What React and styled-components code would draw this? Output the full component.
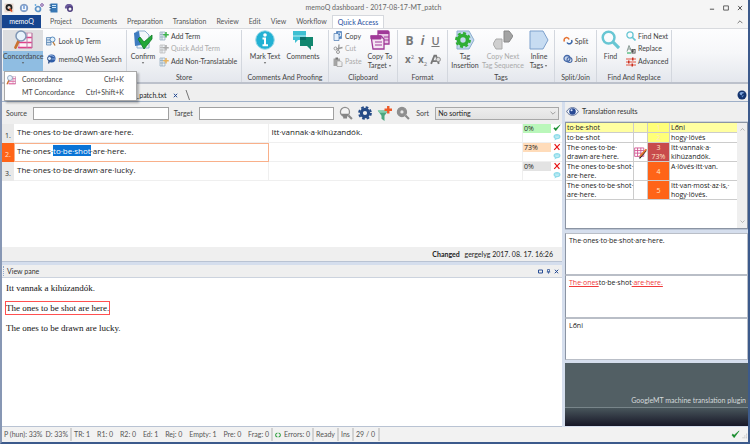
import React from "react";
import styled, { createGlobalStyle, css } from "styled-components";

const Global = createGlobalStyle`
  *, *::before, *::after { box-sizing: border-box; }
  body { margin: 0; background: #f5f5f5; }
  button, input, select { font: inherit; color: inherit; }
  button { border: 0; padding: 0; background: none; }
  svg { display: block; flex: none; }
`;

const ui = `"Lato", "Open Sans", sans-serif`;
const doc = `"Open Sans", "Noto Sans", sans-serif`;

const Window = styled.div`
  display: flex;
  flex-direction: column;
  min-height: 100vh;
  background: #f5f5f5;
  border-left: 2px solid #8797b4;
  border-right: 2px solid #3c5a8c;
  border-bottom: 2px solid #3c5a8c;
  font: 7px/9px ${ui};
  color: #444;
`;

/* ---------- title bar ---------- */
const TitleBar = styled.header`
  display: grid;
  grid-template-columns: 1fr auto 1fr;
  align-items: center;
  height: 15px;
  padding: 0 5px 0 2px;
`;
const QuickIcons = styled.div`
  display: flex;
  gap: 5px;
`;
const Title = styled.h1`
  margin: 0;
  font: inherit;
  color: #666;
`;
const WindowButtons = styled.div`
  display: flex;
  justify-content: flex-end;
  gap: 8px;
`;

/* ---------- tabs ---------- */
const TabRow = styled.nav`
  display: flex;
  height: 13px;
`;
const Tab = styled.button`
  padding: 0 5px;
  height: 13px;
  color: #555;
  ${(p) => p.$main && css`
    width: 39px;
    margin-right: 4px;
    background: #17458f;
    color: #fff;
  `}
  ${(p) => p.$active && css`
    height: 14px;
    background: #fff;
    border: 1px solid #d5d8dd;
    border-bottom: 0;
    color: #1f4fa0;
  `}
`;
const Collapse = styled.button`
  margin-left: auto;
  padding: 0 5px;
`;

/* ---------- ribbon ---------- */
const Ribbon = styled.div`
  display: flex;
  height: 56px;
  padding: 1px 0 0;
  background: linear-gradient(#fdfdfe, #f6f7f9 45%, #e4e7ed);
  border-top: 1px solid #d8dade;
  border-bottom: 2px solid #bcc1cb;
`;
const Group = styled.section`
  display: flex;
  flex-direction: column;
  flex: 0 0 ${(p) => p.$w}px;
  height: 52px;
  border-right: 1px solid #d3d7de;
`;
const GroupBody = styled.div`
  display: flex;
  justify-content: ${(p) => p.$justify || "flex-start"};
  gap: ${(p) => p.$gap || 0}px;
  height: 43px;
  padding-left: ${(p) => p.$pad || 0}px;
`;
const GroupLabel = styled.h2`
  margin: 0;
  font: inherit;
  text-align: center;
  white-space: nowrap;
`;
const BigButton = styled.button`
  display: grid;
  grid-template-rows: 22px 9px 9px;
  justify-items: center;
  align-content: start;
  flex: 0 0 ${(p) => p.$w}px;
  height: 41px;
  color: ${(p) => (p.$off ? "#aaa" : "#444")};
  white-space: nowrap;
  ${(p) => p.$open && css`
    background: linear-gradient(#dddee0 21px, #8fbde2 21px);
  `}
`;
const SmallList = styled.div`
  display: flex;
  flex-direction: column;
  justify-content: space-around;
  padding: ${(p) => (p.$two ? "2px 0 5px" : "0 0 5px")};
`;
const SmallButton = styled.button`
  display: flex;
  align-items: center;
  gap: 2px;
  color: ${(p) => (p.$off ? "#aaa" : "#444")};
  white-space: nowrap;
`;
const FormatGrid = styled.div`
  display: grid;
  grid-template-columns: repeat(3, 13px);
  grid-template-rows: 18px 18px;
  place-items: center;
  padding-top: 2px;
`;
const FormatButton = styled.button`
  font: ${(p) => (p.$italic ? "italic " : "")}bold ${(p) => p.$size || 12}px/14px "Open Sans", sans-serif;
  color: #777;
  ${(p) => p.$under && css`text-decoration: underline; font-weight: 600;`}
  sup, sub { font-size: 6px; line-height: 1px; font-weight: 400; }
`;

/* ---------- drop-down menu ---------- */
const MenuAnchor = styled.div`
  position: relative;
`;
const Menu = styled.ul`
  position: absolute;
  z-index: 2;
  top: 41px;
  left: 1px;
  width: 133px;
  margin: 0;
  padding: 1px 0;
  list-style: none;
  background: #fff;
  border: 1px solid #a9a9a9;
  box-shadow: 2px 2px 2px #0004;
`;
const MenuItem = styled.button`
  display: grid;
  grid-template-columns: 16px 1fr auto;
  align-items: center;
  width: 100%;
  height: 13px;
  padding: 0 12px 0 1px;
  text-align: left;
`;

/* ---------- document strip ---------- */
const DocStrip = styled.div`
  display: flex;
  align-items: flex-end;
  justify-content: space-between;
  height: 18px;
  padding-right: 1px;
  background: #efefef;
  border-bottom: 1px solid #9fb0c8;
`;
const DocTab = styled.div`
  display: flex;
  align-items: center;
  gap: 7px;
  height: 12px;
  margin-left: 134px;
  color: #222;
`;

/* ---------- workspace ---------- */
const Workspace = styled.main`
  flex: 1;
  display: grid;
  grid-template-columns: minmax(0, 560fr) minmax(0, 183fr);
  gap: 3px;
  background: #d5deed;
`;
const Column = styled.div`
  display: grid;
  grid-template-rows: ${(p) => p.$rows};
  gap: 3px;
`;
const Panel = styled.section`
  display: flex;
  flex-direction: column;
  min-height: 0;
  background: #fff;
  border-bottom: 1px solid #b9c3d3;
`;
const FilterBar = styled.form`
  display: grid;
  grid-template-columns: 27px 136fr 30px 136fr 80px 21px 124fr;
  align-items: center;
  height: 22px;
  padding: 0 3px 0 4px;
  background: #efefef;
`;
const FilterInput = styled.input`
  width: 100%;
  height: 13px;
  padding: 0 2px;
  border: 1px solid #a0a0a0;
  background: #fff;
`;
const FilterLabel = styled.label`
  padding-left: ${(p) => p.$pad || 0}px;
`;
const FilterTools = styled.div`
  display: flex;
  justify-content: space-between;
  padding: 0 4px 0 5px;
`;
const SortSelect = styled.select`
  width: 100%;
  height: 13px;
  padding: 0 2px;
  border: 1px solid #a8a8a8;
  border-radius: 0;
  appearance: none;
  background: linear-gradient(#ededed, #e2e2e2);
  color: #222;
`;
const SelectWrap = styled.div`
  display: grid;
  align-items: center;
  > * { grid-area: 1 / 1; }
  > svg { justify-self: end; margin-right: 3px; pointer-events: none; }
`;
const Segments = styled.table`
  width: 100%;
  table-layout: fixed;
  border-collapse: separate;
  border-spacing: 0;
  font: 8px/11px ${doc};
  color: #222;
`;
const Num = styled.th`
  height: 19px;
  padding: 3px 0 0;
  font: 7px/9px ${doc};
  background: ${(p) => (p.$on ? "#ff6418" : "#e9e9e9")};
  color: ${(p) => (p.$on ? "#ffe0cc" : "#333")};
`;
const Seg = styled.td`
  height: 19px;
  padding: 2px 2px 0 3px;
  vertical-align: top;
  white-space: nowrap;
  border-bottom: 1px solid #efefef;
  border-right: 1px solid #efefef;
  ${(p) => p.$on && css`
    padding: 1px 1px 0 2px;
    border: 1px solid #f9b08a;
  `}
`;
const Picked = styled.mark`
  background: #0a74d6;
  color: #fff;
`;
const RateCell = styled.td`
  padding: 0;
  vertical-align: top;
  border-bottom: 1px solid #efefef;
`;
const Rate = styled.div`
  width: 28px;
  height: 9px;
  padding-left: 1px;
  font: 7px/9px ${doc};
  background: ${(p) => p.$bg};
`;
const Marks = styled.div`
  display: grid;
  gap: 1px;
  justify-items: center;
`;
const InfoBar = styled.div`
  margin-top: auto;
  height: 14px;
  padding: 3px 9px 0 0;
  text-align: right;
  background: #efefef;
  color: #222;
  b { margin-right: 3px; }
`;
const PaneHead = styled.header`
  display: flex;
  align-items: center;
  height: ${(p) => p.$h}px;
  padding: 0 3px 0 1px;
  gap: 3px;
  background: #efefef;
  border-bottom: 1px solid #ccd3de;
`;
const Grip = styled.span`
  align-self: stretch;
  width: 1px;
  margin: 1px 0;
  border-left: 1px dotted #8fa9d0;
`;
const PaneTitle = styled.h2`
  margin: 0 auto 0 0;
  font: inherit;
  color: #333;
`;
const ViewText = styled.div`
  padding: 4px;
  font: 9px/12px "Liberation Serif", serif;
  color: #111;
  p { margin: 0 0 8px; }
`;
const Framed = styled.span`
  display: inline-block;
  border: 1px solid #ff5050;
  margin: -1px 0 -1px -1px;
`;

/* ---------- results ---------- */
const ResultBox = styled.div`
  display: flex;
  flex: 1;
  align-items: stretch;
  border: 1px solid #8b94a3;
`;
const Results = styled.table`
  flex: 1;
  align-self: flex-start;
  table-layout: fixed;
  width: 100%;
  border-collapse: separate;
  border-spacing: 0;
  font: 7px/9px ${doc};
  color: #222;
`;
const ResultRow = styled.tr`
  background: ${(p) => (p.$on ? "#ffffa0" : "#fff")};
  td { padding: 0 0 0 1px; vertical-align: top; border-bottom: 1px solid #ccc; border-right: 1px solid #ccc; white-space: nowrap; }
  td:last-child { border-right: 0; }
  td:nth-child(2) { padding: 0; vertical-align: middle; }
`;
const Rank = styled.td`
  ${ResultRow} & { padding: 0; vertical-align: middle; }
  text-align: center;
  background: ${(p) => p.$bg};
  color: #ffe6c8;
`;
const ScrollBar = styled.div`
  display: flex;
  flex-direction: column;
  justify-content: space-between;
  align-items: center;
  flex: 0 0 10px;
  padding: 4px 0;
  background: #efefef;
`;
const DetailStack = styled.div`
  display: grid;
  grid-template-rows: 1fr 1fr 1fr;
`;
const Detail = styled.div`
  padding: 2px 3px;
  background: #fff;
  border: 1px solid #b9bec7;
  border-left-color: #8b94a3;
  font: 7px/9px ${doc};
  color: #222;
`;
const Removed = styled.del`
  color: #f03a3a;
  text-decoration: underline;
  text-decoration-thickness: 1px;
`;
const Plugin = styled.footer`
  display: flex;
  flex-direction: column;
  justify-content: flex-end;
  margin-bottom: 1px;
  background: #525f64;
  color: #d5dadb;
  text-align: right;
  p { margin: 0 2px 2px; }
`;
const PluginBase = styled.div`
  height: 19px;
  border-top: 1px solid #78858a;
  background: linear-gradient(#48555b, #171727);
`;

/* ---------- status bar ---------- */
const StatusBar = styled.footer`
  display: flex;
  align-items: center;
  height: 15px;
  background: #f2f2f2;
  color: #555;
`;
const Stat = styled.span`
  display: flex;
  align-items: center;
  justify-content: space-between;
  gap: 3px;
  flex: 0 0 ${(p) => p.$w}px;
  height: 13px;
  padding: 0 2px;
  border-right: 2px solid #d2d2d2;
  white-space: nowrap;
`;
const StatusEnd = styled.div`
  display: flex;
  align-items: flex-end;
  gap: 2px;
  margin-left: auto;
`;

/* ---------- icons ---------- */
const Svg = ({ w = 10, h = w, vb = 20, children }) => (
  <svg width={w} height={h} viewBox={`0 0 ${vb} ${vb}`} fill="none" aria-hidden="true">{children}</svg>
);
const Lens = ({ w, c = "#68c6d3" }) => (
  <Svg w={w}><circle cx="8" cy="8" r="6.2" stroke={c} strokeWidth="2.6" /><path d="M12.5 12.5 19 19" stroke={c} strokeWidth="3.4" /></Svg>
);
const ConcordIcon = ({ w = 20 }) => (
  <Svg w={w}>
    <path d="M8 3h11v15H6v-7" fill="#fdf3f8" stroke="#c98fb0" strokeWidth=".8" />
    <path d="M9 7.500h10M6 12.500h13M5 17.500h14" stroke="#e0408a" strokeWidth="1.600" />
    <path d="M14 3v15M19 3v15" stroke="#b97fa6" strokeWidth="1" />
    <path d="M6 10 2.500 17.500" stroke="#c9722f" strokeWidth="2.800" strokeLinecap="round" />
    <circle cx="8" cy="6" r="5" fill="#e8f3fb" stroke="#7f96b4" strokeWidth="1.500" />
  </Svg>
);
const DocIcon = ({ plus = "#3bb44a", c = "#8da8bb" }) => (
  <Svg w={10}>
    <path d="M2 2h10v16H2z" fill="#eef3f7" stroke={c} strokeWidth="1.4" />
    <path d="M2 7h10M2 12h10M6 2v16" stroke={c} strokeWidth="1.6" />
    <path d="M14 2v11M8.5 7.5h11" stroke={plus} strokeWidth="3" />
  </Svg>
);
const Bubble = () => (
  <Svg w={8}><ellipse cx="10" cy="9" rx="8.6" ry="6.6" fill="#8fdcea" /><path d="m5 13-1 6 6-4z" fill="#8fdcea" /><path d="M5 8h10M6 11h8" stroke="#fff" strokeWidth="1.2" /></Svg>
);
const Check = ({ w = 8, c = "#138a2b" }) => (
  <Svg w={w}><path d="m2 11 5 6L18 2 7 11.500 4 9z" fill={c} stroke={c} strokeWidth="1.2" /></Svg>
);
const Cross = ({ w = 8, c = "#e81414", s = 3 }) => (
  <Svg w={w}><path d="M4 3 16 17M17 3 3 17" stroke={c} strokeWidth={s} /></Svg>
);
const Chevron = ({ up, c = "#888", w = 6 }) => (
  <Svg w={w}><path d={up ? "M2 14 10 6l8 8" : "m2 6 8 8 8-8"} stroke={c} strokeWidth="2.6" /></Svg>
);
const Caret = () => <Svg w={4}><path d="M4 6h12l-6 8z" fill="#555" /></Svg>;
const InlineCaret = styled.span`
  display: inline-flex;
  align-items: center;
  gap: 1px;
`;
const ConfirmIcon = () => (
  <Svg w={20}>
    <path d="M4 1h8l4 4v13H4z" fill="#f4f8fc" stroke="#8fb0d0" />
    <path d="M1 3 6 1l2 14-6 1z" fill="#3f7cc0" />
    <path d="m5 9 2-2 4 5 8-7v4l-8 10z" fill="#22a83a" stroke="#0e7a22" strokeWidth=".8" />
  </Svg>
);
const InfoIcon = () => (
  <Svg w={20}>
    <circle cx="10" cy="10" r="9.300" fill="#22b1d3" stroke="#9fdbe8" />
    <circle cx="10" cy="5" r="1.800" fill="#fff" />
    <path d="M7.500 8.500H10V15M7.500 15.200h5.500" stroke="#fff" strokeWidth="2" />
  </Svg>
);
const CommentsIcon = () => (
  <Svg w={20}>
    <path d="M0 1h13v9H5l-3 3v-3H0z" fill="#3fc0d2" /><path d="M0 6h13" stroke="#bdeef2" />
    <path d="M7 7h13v9h-2v4l-4-4H7z" fill="#12876f" /><path d="M7 7h6v3H7z" fill="#0b6c68" />
  </Svg>
);
const CopyIcon = () => (
  <Svg w={10}><path d="M7 1h10v14H7z" fill="#4f86c6" stroke="#2d62a4" /><path d="M2 5h8l2 3v11H2z" fill="#e6f0fa" stroke="#4a78b0" strokeWidth="1.400" /><path d="M10 4h5v6h-3" stroke="#fff" strokeWidth="1.500" /></Svg>
);
const CutIcon = () => (
  <Svg w={10}><circle cx="5" cy="9" r="3" stroke="#999" strokeWidth="2" /><circle cx="10" cy="16" r="3" stroke="#999" strokeWidth="2" /><path d="M7 10 19 7M11 13 12 1" stroke="#999" strokeWidth="2.600" /></Svg>
);
const PasteIcon = () => (
  <Svg w={10}><path d="M1 3h13v15H1z" fill="#a5a5a5" /><path d="M5 1h5v4H5z" fill="#777" /><path d="M8 8h7l3 3v8H8z" fill="#eee" stroke="#999" strokeWidth="1.400" /></Svg>
);
const CopyToIcon = () => (
  <Svg w={20}>
    <path d="M8 1h10l1 1v12H8z" fill="#e9c9e6" stroke="#a03a98" strokeWidth="1.300" /><path d="M8 1h11v3H8z" fill="#a03a98" />
    <path d="M1 6h10l3 3v10H3z" fill="#f5e6f4" stroke="#a03a98" strokeWidth="1.300" /><path d="M1 6h10v3H1zM5 12h7M5 15h7" fill="#a03a98" stroke="#a03a98" />
    <path d="M14 7h5M14 10h5" stroke="#a03a98" />
  </Svg>
);
const TagInsertIcon = () => (
  <Svg w={20}>
    <path d="M2 1h12l5 9-5 9H2z" fill="#c3d8ee" stroke="#8daecf" />
    <circle cx="8" cy="10" r="4.500" stroke="#2fae35" strokeWidth="3.600" /><circle cx="8" cy="10" r="6.900" stroke="#2fae35" strokeWidth="2" strokeDasharray="3 2.400" />
  </Svg>
);
const CopyTagIcon = () => (
  <Svg w={20}><path d="M11 1h5l4 5-4 6h-5z" fill="#a3a3a3" stroke="#888" /><path d="M0 14l3-5h6v10H3z" fill="#cfcfcf" stroke="#aaa" /></Svg>
);
const InlineTagIcon = () => (
  <Svg w={20}><path d="M1 1h13l5 9-5 9H1z" fill="#c7dcf2" stroke="#7da0cc" /></Svg>
);
const SplitIcon = () => (
  <Svg w={10}><path d="M3 11a5 5 0 1 1 9-4" stroke="#e5702f" strokeWidth="3" /><path d="M17 8a5 5 0 1 1-9 5" stroke="#3a66a8" strokeWidth="3" /></Svg>
);
const JoinIcon = () => (
  <Svg w={10}><circle cx="8" cy="9" r="6" fill="#c3d3ec" stroke="#4669a8" strokeWidth="2.600" /><circle cx="13" cy="12" r="5" stroke="#4669a8" strokeWidth="2.200" /></Svg>
);
const ReplaceIcon = () => (
  <Svg w={10}><path d="M2 15 6 3l5 12M4 10h6" stroke="#889a94" strokeWidth="2" /><path d="M2 18h8" stroke="#39b36b" strokeWidth="2.400" /><path d="M11 10h8v9h-8z" fill="#444" /><path d="M13 12h4v5h-4M14 14.500h3" stroke="#fff" /></Svg>
);
const AdvancedIcon = () => (
  <Svg w={10}><path d="M0 4h20M0 10h20M0 16h20" stroke="#e2533f" strokeWidth="2" /><path d="M12 1h3v6h-3zM4 7h3v6H4zM11 13h3v6h-3z" fill="#c92f20" /></Svg>
);
const LookUpIcon = () => (
  <Svg w={10}><path d="M1 3h9v15H1z" fill="#cfe0f0" stroke="#5c86b4" strokeWidth="1.600" /><path d="M1 8h9M1 13h9" stroke="#5c86b4" strokeWidth="1.600" /><circle cx="13" cy="7" r="5" fill="#e6f3fb" stroke="#4b80b8" strokeWidth="1.800" /><path d="m14 12 4 7" stroke="#b97b3c" strokeWidth="2.600" /></Svg>
);
const WebIcon = () => (
  <Svg w={10}><circle cx="11" cy="9" r="8" fill="#2e5ca8" /><path d="M5 5c4-3 8-2 12 1M4 10h14" stroke="#a9c7ee" strokeWidth="1.600" /><circle cx="7" cy="9" r="4" fill="#d8e8f8" stroke="#2a4c86" strokeWidth="1.600" /><path d="m7 13-2 6" stroke="#2a4c86" strokeWidth="2.600" /></Svg>
);
const FunnelPlus = () => (
  <Svg w={15}><path d="M1 6h14l-5 7v7l-4-3v-4z" fill="#4ba67f" /><path d="M1 6h14l-2 3H3z" fill="#86cfae" /><path d="M15 0v10M10 5h10" stroke="#ee5a28" strokeWidth="3.200" /></Svg>
);
const Gear = ({ w = 14, c = "#244a86" }) => (
  <Svg w={w}><circle cx="10" cy="10" r="5.200" stroke={c} strokeWidth="4.400" /><circle cx="10" cy="10" r="8.400" stroke={c} strokeWidth="2.800" strokeDasharray="3.800 2.800" /></Svg>
);
const GreyLens = ({ half }) => (
  <Svg w={14}>
    <circle cx="8.500" cy="8.500" r="6.500" fill={half ? "#f4f4f4" : "#8f8f8f"} stroke="#8f8f8f" strokeWidth="1.800" />
    {half ? <path d="M2.500 11h12l-3 4v3H6v-3z" fill="#858585" /> : <circle cx="8.500" cy="8.500" r="2.300" fill="#e8e8e8" />}
    <path d="m13.500 13.500 5 5" stroke="#8a8a8a" strokeWidth="3" />
  </Svg>
);
const Eye = () => (
  <Svg w={13}><path d="M1 10c4-8 14-8 18 0-4 8-14 8-18 0z" fill="#eef3fa" stroke="#4c5f8c" strokeWidth="1.300" /><circle cx="10" cy="10" r="5" fill="#294a94" /><circle cx="8.500" cy="8" r="1.600" fill="#dfe9ff" /></Svg>
);
const Globe = () => (
  <Svg w={10}><circle cx="10" cy="10" r="9" fill="#15356f" /><path d="M5 6c3-3 7-3 10 0l-4 1-2 4-3-2z" fill="#7fa6dd" /><path d="m9 12 5-2-3 5z" fill="#5f8fd0" /></Svg>
);
const ResultIcon = () => (
  <Svg w={13}><path d="M1 3h14v13H1zM1 7h14M1 11h14M5.500 3v13M10.500 3v13" stroke="#cf4f8e" strokeWidth="1.300" /><path d="m4 11 4 7L19 5v3L9 20z" fill="#222" /><path d="M9 16 19 5" stroke="#e8752b" strokeWidth="2.600" /></Svg>
);
const FontIcon = () => (
  <Svg w={11}><path d="M2 18 8 3h3l5 15M5 13h9" stroke="#777" strokeWidth="3.400" /><circle cx="15" cy="10" r="4" fill="#ddd" stroke="#888" strokeWidth="1.600" /></Svg>
);
const QuickSet = () => (
  <QuickIcons>
    <Svg w={10}><path d="M1 1h18v18H1z" fill="#e9d8d0" /><circle cx="10" cy="9" r="5" stroke="#222" strokeWidth="3.600" /><path d="m11 11 5 6" stroke="#d8491d" strokeWidth="3.400" /></Svg>
    <Svg w={10}><circle cx="10" cy="10" r="7.500" fill="#8fb0de" stroke="#8098bd" strokeWidth="2" /><path d="M7 6v6M13 6v6M6 13h8" stroke="#fff" strokeWidth="1.800" /></Svg>
    <Svg w={10}><circle cx="8" cy="12" r="5" stroke="#5c93c8" strokeWidth="3.400" /><circle cx="16" cy="4" r="2.600" stroke="#7b52a0" strokeWidth="2" /><circle cx="3" cy="4" r="1.800" fill="#68aadb" /></Svg>
    <Svg w={10}><path d="M3 1h14v18H3z" fill="#3878b5" /><path d="M6 5h8M6 9h8" stroke="#cfe6f8" strokeWidth="2" /><path d="M1 4h4M1 9h4M1 14h4" stroke="#1d4a7a" strokeWidth="2" /></Svg>
    <Svg w={10}><path d="M2 11C1 5 6 1 10 2c5-1 9 4 8 9z" fill="#6b5b9b" /><circle cx="12" cy="12" r="4.500" fill="#f5f5f5" stroke="#4b3c7c" strokeWidth="3" /></Svg>
  </QuickIcons>
);

const tabs = ["Project", "Documents", "Preparation", "Translation", "Review", "Edit", "View", "Workflow"];

const segments = [
  { n: 1, src: "The·ones·to·be·drawn·are·here.", tgt: "Itt·vannak·a·kihúzandók.", rate: "0%", bg: "#baf7ba", ok: true },
  { n: 2, src: <>The·ones·<Picked>to·be·shot</Picked>·are·here.</>, tgt: "", rate: "73%", bg: "#ffdcba", on: true },
  { n: 3, src: "The·ones·to·be·drawn·are·lucky.", tgt: "", rate: "0%", bg: "#e3e3e3" },
];

const results = [
  { a: "to·be·shot", r: "1", bg: "#ffff78", b: "Lőni", on: true },
  { a: "to·be·shot", r: "2", bg: "#ffff78", b: "hogy·lövés" },
  { a: <>The·ones·to·be·<br />drawn·are·here.</>, r: <>3<br />73%</>, bg: "#c84b4b", b: <>Itt·vannak·a·<br />kihúzandók.</>, icon: true },
  { a: <>The·ones·to·be·shot·<br />are·here.</>, r: "4", bg: "#ff6418", b: "A·lövés·itt·van." },
  { a: <>The·ones·to·be·shot·<br />are·here.</>, r: "5", bg: "#ff6418", b: <>Itt·van·most·az·is,·<br />hogy·lövés.</> },
];

const Big = ({ w, icon, children, caret, ...rest }) => (
  <BigButton type="button" $w={w} {...rest}>
    {icon}
    <span>{children[0]}</span>
    {children[1] ? <InlineCaret>{children[1]}{caret && <Caret />}</InlineCaret> : caret ? <Caret /> : null}
  </BigButton>
);

const RibbonArea = () => (
  <Ribbon>
    <Group $w={125}>
      <GroupBody $pad={1} $gap={3}>
        <MenuAnchor>
          <Big w={44} $open icon={<ConcordIcon />} caret>{["Concordance"]}</Big>
          <Menu>
            <li><MenuItem><ConcordIcon w={10} /><span>Concordance</span><span>Ctrl+K</span></MenuItem></li>
            <li><MenuItem><i /><span>MT Concordance</span><span>Ctrl+Shift+K</span></MenuItem></li>
          </Menu>
        </MenuAnchor>
        <SmallList $two>
          <SmallButton><LookUpIcon />Look Up Term</SmallButton>
          <SmallButton><WebIcon />memoQ Web Search</SmallButton>
        </SmallList>
      </GroupBody>
    </Group>
    <Group $w={115}>
      <GroupBody $pad={1} $gap={1}>
        <Big w={30} icon={<ConfirmIcon />} caret>{["Confirm"]}</Big>
        <SmallList>
          <SmallButton><DocIcon />Add Term</SmallButton>
          <SmallButton $off><DocIcon plus="#aaa" c="#b5b5b5" />Quick Add Term</SmallButton>
          <SmallButton><DocIcon plus="#e8b25c" />Add Non-Translatable</SmallButton>
        </SmallList>
      </GroupBody>
      <GroupLabel>Store</GroupLabel>
    </Group>
    <Group $w={87}>
      <GroupBody $pad={5} $gap={2}>
        <Big w={36} icon={<InfoIcon />} caret>{["Mark Text"]}</Big>
        <Big w={36} icon={<CommentsIcon />}>{["Comments"]}</Big>
      </GroupBody>
      <GroupLabel>Comments And Proofing</GroupLabel>
    </Group>
    <Group $w={69}>
      <GroupBody $pad={4} $gap={3}>
        <SmallList>
          <SmallButton><CopyIcon />Copy</SmallButton>
          <SmallButton $off><CutIcon />Cut</SmallButton>
          <SmallButton $off><PasteIcon />Paste</SmallButton>
        </SmallList>
        <Big w={30} icon={<CopyToIcon />} caret>{["Copy To", "Target"]}</Big>
      </GroupBody>
      <GroupLabel>Clipboard</GroupLabel>
    </Group>
    <Group $w={50}>
      <GroupBody $justify="center">
        <FormatGrid>
          <FormatButton>B</FormatButton>
          <FormatButton $italic>i</FormatButton>
          <FormatButton $under $size={11}>U</FormatButton>
          <FormatButton $size={10}>x<sup>2</sup></FormatButton>
          <FormatButton $size={10}>x<sub>2</sub></FormatButton>
          <FormatButton aria-label="Font"><FontIcon /></FormatButton>
        </FormatGrid>
      </GroupBody>
      <GroupLabel>Format</GroupLabel>
    </Group>
    <Group $w={107}>
      <GroupBody $pad={2}>
        <Big w={30} icon={<TagInsertIcon />}>{["Tag", "Insertion"]}</Big>
        <Big w={46} $off icon={<CopyTagIcon />}>{["Copy Next", "Tag Sequence"]}</Big>
        <Big w={26} icon={<InlineTagIcon />} caret>{["Inline", "Tags"]}</Big>
      </GroupBody>
      <GroupLabel>Tags</GroupLabel>
    </Group>
    <Group $w={42}>
      <GroupBody $justify="center">
        <SmallList $two>
          <SmallButton><SplitIcon />Split</SmallButton>
          <SmallButton><JoinIcon />Join</SmallButton>
        </SmallList>
      </GroupBody>
      <GroupLabel>Split/Join</GroupLabel>
    </Group>
    <Group $w={75}>
      <GroupBody $pad={2} $gap={4}>
        <Big w={23} icon={<Lens w={19} />}>{["Find"]}</Big>
        <SmallList>
          <SmallButton><Lens w={10} />Find Next</SmallButton>
          <SmallButton><ReplaceIcon />Replace</SmallButton>
          <SmallButton><AdvancedIcon />Advanced</SmallButton>
        </SmallList>
      </GroupBody>
      <GroupLabel>Find And Replace</GroupLabel>
    </Group>
  </Ribbon>
);

const Editor = () => (
  <Panel>
    <FilterBar>
      <FilterLabel htmlFor="source">Source</FilterLabel>
      <FilterInput id="source" />
      <FilterLabel $pad={5} htmlFor="target">Target</FilterLabel>
      <FilterInput id="target" />
      <FilterTools><GreyLens half /><Gear /><FunnelPlus /><GreyLens /></FilterTools>
      <FilterLabel $pad={2} htmlFor="sort">Sort</FilterLabel>
      <SelectWrap>
        <SortSelect id="sort"><option>No sorting</option></SortSelect>
        <Chevron />
      </SelectWrap>
    </FilterBar>
    <Segments>
      <colgroup><col width="12" /><col /><col /><col width="29" /><col width="10" /></colgroup>
      <tbody>
        {segments.map((s) => (
          <tr key={s.n}>
            <Num scope="row" $on={s.on}>{s.n}.</Num>
            <Seg $on={s.on}>{s.src}</Seg>
            <Seg>{s.tgt}</Seg>
            <RateCell><Rate $bg={s.bg}>{s.rate}</Rate></RateCell>
            <RateCell><Marks>{s.ok ? <Check /> : <Cross />}<Bubble /></Marks></RateCell>
          </tr>
        ))}
      </tbody>
    </Segments>
    <InfoBar><b>Changed</b> gergelyg 2017. 08. 17. 16:26</InfoBar>
  </Panel>
);

const ViewPane = () => (
  <Panel>
    <PaneHead $h={13}>
      <Grip />
      <PaneTitle>View pane</PaneTitle>
      <Svg w={5}><path d="M2 4h16v12H2z" stroke="#2a4f96" strokeWidth="4" /></Svg>
      <Svg w={5}><path d="M6 2h8v9H6zM3 12h14M10 12v7" stroke="#2a4f96" strokeWidth="3" /></Svg>
      <Cross w={5} c="#1f4690" s={4} />
    </PaneHead>
    <ViewText>
      <p>Itt vannak a kihúzandók.</p>
      <p><Framed>The ones to be shot are here.</Framed></p>
      <p>The ones to be drawn are lucky.</p>
    </ViewText>
  </Panel>
);

const ResultsPanel = () => (
  <Panel>
    <PaneHead $h={20}>
      <Eye />
      <PaneTitle>Translation results</PaneTitle>
    </PaneHead>
    <ResultBox>
      <Results>
        <colgroup><col width="68" /><col width="14" /><col width="22" /><col /></colgroup>
        <tbody>
          {results.map((r, i) => (
            <ResultRow key={i} $on={r.on}>
              <td>{r.a}</td>
              <td>{r.icon && <ResultIcon />}</td>
              <Rank $bg={r.bg}>{r.r}</Rank>
              <td>{r.b}</td>
            </ResultRow>
          ))}
        </tbody>
      </Results>
      <ScrollBar><Chevron up w={5} c="#999" /><Chevron w={5} c="#999" /></ScrollBar>
    </ResultBox>
  </Panel>
);

export default function App() {
  return (
    <Window>
      <Global />
      <TitleBar>
        <QuickSet />
        <Title>memoQ dashboard - 2017-08-17-MT_patch</Title>
        <WindowButtons>
          <button aria-label="Minimize"><Svg w={6}><path d="M3 14h14" stroke="#444" strokeWidth="3" /></Svg></button>
          <button aria-label="Maximize"><Svg w={6}><path d="M2 3h16v14H2z" stroke="#555" strokeWidth="3" /></Svg></button>
          <button aria-label="Close"><Cross w={6} c="#444" s={3} /></button>
        </WindowButtons>
      </TitleBar>
      <TabRow>
        <Tab $main>memoQ</Tab>
        {tabs.map((t) => <Tab key={t}>{t}</Tab>)}
        <Tab $active>Quick Access</Tab>
        <Collapse aria-label="Collapse ribbon"><Chevron up c="#555" /></Collapse>
      </TabRow>
      <RibbonArea />
      <DocStrip>
        <DocTab>
          <span>_patch.txt</span>
          <button aria-label="Close document"><Cross w={5} c="#1f4690" s={4} /></button>
          <Svg w={10}><path d="M2 0 9 20" stroke="#555" strokeWidth="1.600" /></Svg>
        </DocTab>
        <GlobeSlot aria-label="Web"><Globe /></GlobeSlot>
      </DocStrip>
      <Workspace>
        <Column $rows="minmax(0, 160fr) minmax(0, 161fr)">
          <Editor />
          <ViewPane />
        </Column>
        <Column $rows="minmax(0, 128fr) minmax(0, 127fr) minmax(0, 64fr)">
          <ResultsPanel />
          <DetailStack>
            <Detail>The·ones·to·be·shot·are·here.</Detail>
            <Detail><Removed>The·ones</Removed>to·be·shot<Removed>·are·here.</Removed></Detail>
            <Detail>Lőni</Detail>
          </DetailStack>
          <Plugin>
            <p>GoogleMT machine translation plugin</p>
            <PluginBase />
          </Plugin>
        </Column>
      </Workspace>
      <StatusBar>
        <Stat $w={70}><span>P (hun): 33%</span><span>D: 33%</span></Stat>
        <Stat $w={201}>
          {["TR: 1", "R1: 0", "R2: 0", "Ed: 1", "Rej: 0", "Empty: 1", "Pre: 0", "Frag: 0"].map((s) => <span key={s}>{s}</span>)}
        </Stat>
        <Stat $w={39}><Svg w={6}><path d="M8 3C0 5 0 15 8 17M12 3c8 2 8 12 0 14" stroke="#2a9d3a" strokeWidth="3.400" /></Svg><span>Errors: 0</span></Stat>
        <Stat $w={25}><span>Ready</span></Stat>
        <Stat $w={15}><span>Ins</span></Stat>
        <Stat $w={26}><span>29 / 0</span></Stat>
        <StatusEnd>
          <Check w={9} c="#128a28" />
          <Svg w={6}><path d="M14 4h3M14 10h3M8 10h3M14 16h3M8 16h3M2 16h3" stroke="#aaa" strokeWidth="3" /></Svg>
        </StatusEnd>
      </StatusBar>
    </Window>
  );
}

const GlobeSlot = styled.button`
  padding-bottom: 1px;
`;
